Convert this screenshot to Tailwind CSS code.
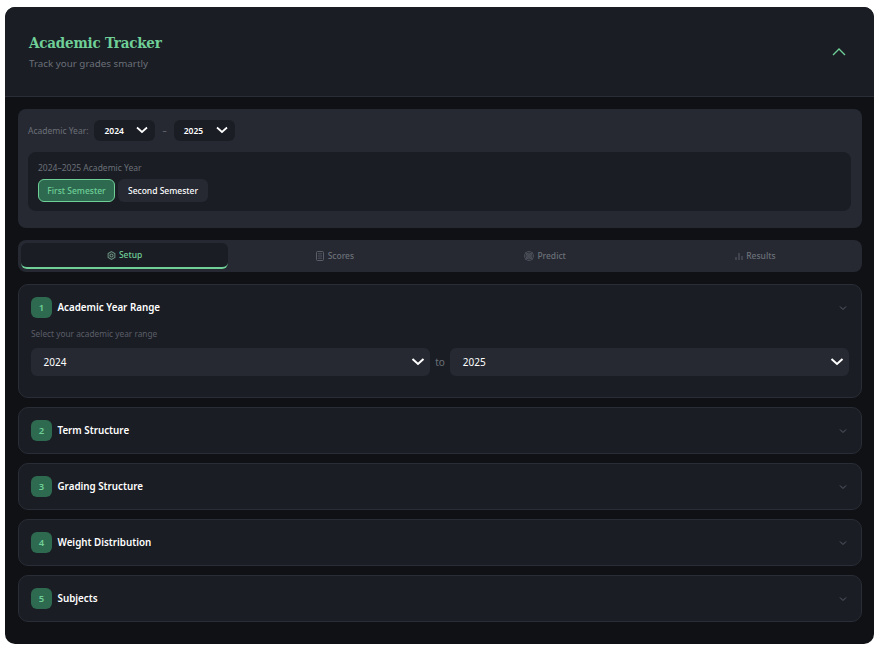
<!DOCTYPE html>
<html lang="en">
<head>
<meta charset="utf-8">
<title>Academic Tracker</title>
<script src="https://cdn.jsdelivr.net/npm/@tailwindcss/browser@4"></script>
</head>
<body class="bg-white font-['Noto_Sans','Inter',sans-serif] overflow-hidden">
<div class="w-[877px] h-[651px] pt-[7px] pl-[5px]">
  <div class="w-[869px] h-[637px] rounded-[10px] bg-[#0f1115] overflow-hidden">
    <header class="h-[90px] pl-[24px] pr-[27px] bg-[#1a1d24] border-b border-[#2a2d36] flex items-center justify-between">
      <div class="pt-[2px]">
        <h1 class="text-[15px] leading-[20px] font-bold text-[#6fcf97] font-['DejaVu_Serif_Condensed','DejaVu_Serif',serif] tracking-[-0.2px]">Academic Tracker</h1>
        <p class="text-[9.8px] leading-[16px] mt-[3px] text-[#6b7078]">Track your grades smartly</p>
      </div>
      <svg width="16" height="16" viewBox="0 0 16 16" fill="none" stroke="#6fcf97" stroke-width="1.4"><path d="M2 11l6-6 6 6"/></svg>
    </header>
    <main class="pl-[13px] pr-[12px] pt-[12px]">
      <section class="h-[119px] rounded-lg bg-[#262932] pl-[10px] pr-[11px] pt-[11px]">
        <div class="flex items-center h-[21px] text-[8.5px] text-[#6b7078]">
          <span class="mr-[6px] pt-[1px]">Academic Year:</span>
          <div class="w-[61px] h-[21px] rounded-md bg-[#1a1d24] flex items-center justify-between pl-[10px] pr-[5px] text-[8.5px] font-semibold text-white"><span class="pt-[1px]">2024</span><svg width="14" height="14" viewBox="0 0 14 14" fill="none" stroke="#fff" stroke-width="1.7"><path d="M1 3.5l5 4.5 5-4.5"/></svg></div>
          <span class="mx-[7px] pt-[1px]">–</span>
          <div class="w-[61px] h-[21px] rounded-md bg-[#1a1d24] flex items-center justify-between pl-[10px] pr-[5px] text-[8.5px] font-semibold text-white"><span class="pt-[1px]">2025</span><svg width="14" height="14" viewBox="0 0 14 14" fill="none" stroke="#fff" stroke-width="1.7"><path d="M1 3.5l5 4.5 5-4.5"/></svg></div>
        </div>
        <div class="mt-[11px] h-[59px] rounded-lg bg-[#1a1d24] pl-[10px] pr-[9px] pt-[9px]">
          <p class="text-[8.5px] leading-[14px] text-[#6b7078]">2024–2025 Academic Year</p>
          <div class="flex gap-[3px] mt-[4px]">
            <div class="w-[77px] h-[23px] pt-[1px] rounded-md bg-[#2d6a4f] border border-[#6fcf97] flex items-center justify-center text-[8.5px] font-medium text-[#6fcf97]">First Semester</div>
            <div class="w-[90px] h-[23px] pt-[1px] rounded-md bg-[#262932] flex items-center justify-center text-[8.5px] font-medium text-white">Second Semester</div>
          </div>
        </div>
      </section>
      <nav class="mt-[12px] h-[32px] rounded-lg bg-[#262932] grid grid-cols-4 gap-[3px] p-[3px] text-[8.5px] text-[#6b7078] font-medium">
        <div class="rounded-md bg-[#1a1d24] border-b-2 border-[#6fcf97] flex items-center justify-center gap-[3px] text-[#6fcf97]">
          <svg width="9" height="9" viewBox="0 0 16 16" fill="none" stroke="#6b9080" stroke-width="1.8"><path d="M8 1l6 3.5v7L8 15l-6-3.5v-7z"/><circle cx="8" cy="8" r="2.8"/></svg>
          <span>Setup</span>
        </div>
        <div class="flex items-center justify-center gap-[4px]">
          <svg width="8" height="10" viewBox="0 0 8 10" fill="none" stroke="#5a5e68"><rect x="0.5" y="0.5" width="7" height="9" rx="1"/><path d="M2 2.8h4M2 5h4M2 7.2h4" stroke-width="0.8"/></svg>
          <span>Scores</span>
        </div>
        <div class="flex items-center justify-center gap-[3px]">
          <svg width="10" height="10" viewBox="0 0 10 10" fill="none" stroke="#5a5e68" stroke-width="0.7"><circle cx="5" cy="5" r="4.5"/><circle cx="5" cy="5" r="3"/><circle cx="5" cy="5" r="1.5"/><path d="M1 1l8 8M9 1l-8 8" stroke-width="0.5"/></svg>
          <span>Predict</span>
        </div>
        <div class="flex items-center justify-center gap-[3px]">
          <svg width="8" height="8" viewBox="0 0 8 8" fill="none" stroke="#5a5e68" stroke-width="1"><path d="M1 8V5M4 8V1M7 8V4"/></svg>
          <span>Results</span>
        </div>
      </nav>
      <div class="mt-[12px] flex flex-col gap-[9px]">
        <section class="h-[114px] rounded-[10px] bg-[#1a1d24] border border-[#2a2d36] pl-[12px] pr-[12px]">
          <div class="h-[45px] pr-[1px] flex items-center justify-between">
            <div class="flex items-center gap-[5.5px]">
              <span class="w-[21px] h-[21px] pt-[1px] rounded-md bg-[#2d6a4f] flex items-center justify-center text-[9.5px] font-semibold text-[#6fcf97]">1</span>
              <span class="pt-[1px] text-[9.8px] font-semibold text-white">Academic Year Range</span>
            </div>
            <svg width="10" height="10" viewBox="0 0 10 10" fill="none" stroke="#5a5e68"><path d="M2 3.5l3 3 3-3"/></svg>
          </div>
          <p class="text-[8.3px] leading-[14px] text-[#5a5e68] mt-[-3px]">Select your academic year range</p>
          <div class="flex items-center mt-[7px]">
            <div class="flex-1 h-[28px] rounded-md bg-[#262932] flex items-center justify-between pl-[12.5px] pr-[4px] text-[10px] text-white"><span class="pt-[1px]">2024</span><svg width="16" height="16" viewBox="0 0 16 16" fill="none" stroke="#fff" stroke-width="2"><path d="M2.5 5l5.5 5 5.5-5"/></svg></div>
            <span class="mx-[5.5px] text-[10px] text-[#6b7078] pt-[1px]">to</span>
            <div class="flex-1 h-[28px] rounded-md bg-[#262932] flex items-center justify-between pl-[12.5px] pr-[4px] text-[10px] text-white"><span class="pt-[1px]">2025</span><svg width="16" height="16" viewBox="0 0 16 16" fill="none" stroke="#fff" stroke-width="2"><path d="M2.5 5l5.5 5 5.5-5"/></svg></div>
          </div>
        </section>
        <section class="h-[47px] rounded-[10px] bg-[#1a1d24] border border-[#2a2d36] pl-[12px] pr-[13px] flex items-center justify-between">
          <div class="flex items-center gap-[5.5px]">
            <span class="w-[21px] h-[21px] pt-[1px] rounded-md bg-[#2d6a4f] flex items-center justify-center text-[9.5px] font-semibold text-[#6fcf97]">2</span>
            <span class="pt-[1px] text-[9.8px] font-semibold text-white">Term Structure</span>
          </div>
          <svg width="10" height="10" viewBox="0 0 10 10" fill="none" stroke="#5a5e68"><path d="M2 3.5l3 3 3-3"/></svg>
        </section>
        <section class="h-[47px] rounded-[10px] bg-[#1a1d24] border border-[#2a2d36] pl-[12px] pr-[13px] flex items-center justify-between">
          <div class="flex items-center gap-[5.5px]">
            <span class="w-[21px] h-[21px] pt-[1px] rounded-md bg-[#2d6a4f] flex items-center justify-center text-[9.5px] font-semibold text-[#6fcf97]">3</span>
            <span class="pt-[1px] text-[9.8px] font-semibold text-white">Grading Structure</span>
          </div>
          <svg width="10" height="10" viewBox="0 0 10 10" fill="none" stroke="#5a5e68"><path d="M2 3.5l3 3 3-3"/></svg>
        </section>
        <section class="h-[47px] rounded-[10px] bg-[#1a1d24] border border-[#2a2d36] pl-[12px] pr-[13px] flex items-center justify-between">
          <div class="flex items-center gap-[5.5px]">
            <span class="w-[21px] h-[21px] pt-[1px] rounded-md bg-[#2d6a4f] flex items-center justify-center text-[9.5px] font-semibold text-[#6fcf97]">4</span>
            <span class="pt-[1px] text-[9.8px] font-semibold text-white">Weight Distribution</span>
          </div>
          <svg width="10" height="10" viewBox="0 0 10 10" fill="none" stroke="#5a5e68"><path d="M2 3.5l3 3 3-3"/></svg>
        </section>
        <section class="h-[47px] rounded-[10px] bg-[#1a1d24] border border-[#2a2d36] pl-[12px] pr-[13px] flex items-center justify-between">
          <div class="flex items-center gap-[5.5px]">
            <span class="w-[21px] h-[21px] pt-[1px] rounded-md bg-[#2d6a4f] flex items-center justify-center text-[9.5px] font-semibold text-[#6fcf97]">5</span>
            <span class="pt-[1px] text-[9.8px] font-semibold text-white">Subjects</span>
          </div>
          <svg width="10" height="10" viewBox="0 0 10 10" fill="none" stroke="#5a5e68"><path d="M2 3.5l3 3 3-3"/></svg>
        </section>
      </div>
    </main>
  </div>
</div>
</body>
</html>
